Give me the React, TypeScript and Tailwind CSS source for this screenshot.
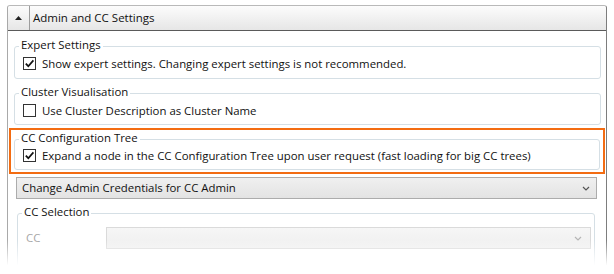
import React from 'react';

const font = { fontFamily: '"Segoe UI", "Open Sans", sans-serif' };

function CheckBox({ checked }: { checked?: boolean }) {
  return (
    <span className="flex h-[13px] w-[13px] shrink-0 items-center justify-center border border-[#333] bg-white">
      {checked && (
        <svg width="11" height="11" viewBox="0 0 11 11">
          <path d="M1.8 5.6 L4.3 8.2 L9.4 2.4" fill="none" stroke="#111" strokeWidth="1.7" />
        </svg>
      )}
    </span>
  );
}

function GroupBox({ title, children, className = '' }: { title: string; children: React.ReactNode; className?: string }) {
  return (
    <div className={`relative rounded-[3px] border border-[#d5dfe5] ${className}`}>
      <span className="absolute left-[4px] top-[-10px] bg-white px-[2px] text-[11.4px] leading-[16px] text-[#111]">
        {title}
      </span>
      {children}
    </div>
  );
}

function CheckRow({ checked, label, className }: { checked?: boolean; label: string; className: string }) {
  return (
    <div className={`flex items-center gap-[6px] pl-[8px] ${className}`}>
      <CheckBox checked={checked} />
      <span className="text-[11.4px] leading-[13px] text-[#111] whitespace-nowrap">{label}</span>
    </div>
  );
}

function Chevron({ color }: { color: string }) {
  return (
    <svg width="8" height="5" viewBox="0 0 8 5">
      <path d="M1 1 L4 4 L7 1" fill="none" stroke={color} strokeWidth="1.2" />
    </svg>
  );
}

export default function App() {
  return (
    <div className="relative h-[274px] w-[614px] overflow-hidden bg-white px-[7px] pt-[5px]" style={font}>
      <div className="flex h-full flex-col rounded-t-[3px] border-x border-t border-l-[#a9a9a9] border-r-[#7d7d7d] border-t-[#b9b9b9]">
        {/* header */}
        <div className="flex h-[25px] items-stretch rounded-t-[3px] border-b border-[#5a5a5a] bg-gradient-to-b from-[#fcfcfc] to-[#e6e6e6]">
          <div className="flex w-[22px] items-center justify-center border-r border-[#9d9d9d]">
            <svg width="7" height="4" viewBox="0 0 7 4">
              <path d="M0 4 L3.5 0 L7 4 Z" fill="#222" />
            </svg>
          </div>
          <div className="flex items-center pl-[3px] text-[11.5px] text-[#111]">Admin and CC Settings</div>
        </div>

        <div className="flex flex-col pt-[15px]">
          <GroupBox title="Expert Settings" className="ml-[6px] mr-[5px]">
            <CheckRow checked className="pt-[10px] pb-[8px]" label="Show expert settings. Changing expert settings is not recommended." />
          </GroupBox>

          <GroupBox title="Cluster Visualisation" className="ml-[6px] mr-[5px] mt-[14px]">
            <CheckRow className="pt-[10px] pb-[7px]" label="Use Cluster Description as Cluster Name" />
          </GroupBox>

          <div className="ml-[1px] mr-[1px] mt-[3px] border-2 border-[#f36c12] px-[3px] pt-[9px] pb-[2px]">
            <GroupBox title="CC Configuration Tree">
              <CheckRow checked className="pt-[9px] pb-[7px]" label="Expand a node in the CC Configuration Tree upon user request (fast loading for big CC trees)" />
            </GroupBox>
          </div>

          <div className="ml-[8px] mr-[9px] mt-[3px] flex h-[22px] items-center justify-between border border-[#acacac] bg-gradient-to-b from-[#f0f0f0] to-[#e3e3e3] pl-[5px] pr-[6px]">
            <span className="text-[11.4px] text-[#111]">Change Admin Credentials for CC Admin</span>
            <Chevron color="#555" />
          </div>

          <GroupBox title="CC Selection" className="ml-[9px] mr-[11px] mt-[14px] h-[60px]">
            <div className="flex items-center pl-[8px] pr-[3px] pt-[13px]">
              <span className="w-[80px] text-[11.4px] text-[#a6a6a6]">CC</span>
              <div className="flex h-[22px] flex-1 items-center justify-end border border-[#dadada] bg-gradient-to-b from-[#f6f6f6] to-[#efefef] pr-[8px]">
                <Chevron color="#b5b5b5" />
              </div>
            </div>
          </GroupBox>
        </div>
      </div>
      <div className="absolute inset-x-0 bottom-0 h-[34px] bg-gradient-to-b from-white/0 via-white via-75% to-white" />
    </div>
  );
}
